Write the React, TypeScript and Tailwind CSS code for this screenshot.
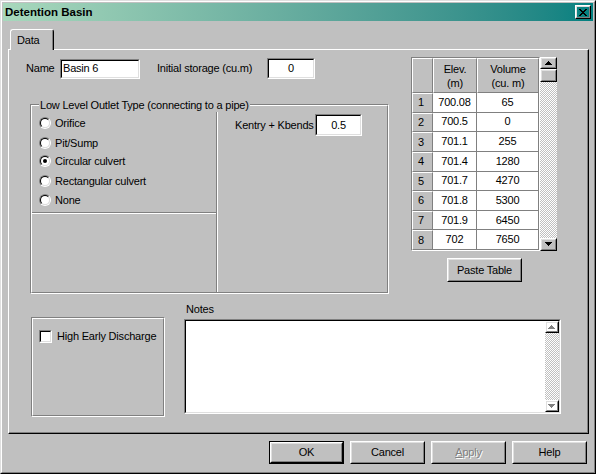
import React from 'react';

const raisedOuter = 'border border-t-white border-l-white border-r-black border-b-black';
const raisedInner = 'border border-t-[#dfdfdf] border-l-[#dfdfdf] border-r-[#808080] border-b-[#808080]';
const sunkenOuter = 'border border-t-[#808080] border-l-[#808080] border-r-white border-b-white';
const sunkenInner = 'border border-t-black border-l-black border-r-[#dfdfdf] border-b-[#dfdfdf]';
const etchedOuter = 'border border-t-[#808080] border-l-[#808080] border-r-white border-b-white';
const etchedInner = 'border border-t-white border-l-white border-r-[#808080] border-b-[#808080]';
const checker = 'bg-[repeating-conic-gradient(#c0c0c0_0%_25%,#ffffff_0%_50%)] bg-[length:2px_2px]';

const rows = [
  ['700.08', '65'],
  ['700.5', '0'],
  ['701.1', '255'],
  ['701.4', '1280'],
  ['701.7', '4270'],
  ['701.8', '5300'],
  ['701.9', '6450'],
  ['702', '7650'],
];

const radios = [
  { label: 'Orifice', mt: 'mt-[11px]' },
  { label: 'Pit/Sump', mt: 'mt-[8px]' },
  { label: 'Circular culvert', mt: 'mt-[6px]', checked: true },
  { label: 'Rectangular culvert', mt: 'mt-[8px]' },
  { label: 'None', mt: 'mt-[7px]' },
];

function Arrow({ up, disabled }: { up?: boolean; disabled?: boolean }) {
  const r = up
    ? [[3, 0, 1], [2, 1, 3], [1, 2, 5], [0, 3, 7]]
    : [[0, 0, 7], [1, 1, 5], [2, 2, 3], [3, 3, 1]];
  return (
    <svg width="8" height="5" viewBox="0 0 8 5" shapeRendering="crispEdges">
      {disabled &&
        r.map(([x, y, w]) => (
          <rect key={'s' + y} x={x + 1} y={y + 1} width={w} height={1} fill="#ffffff" />
        ))}
      {r.map(([x, y, w]) => (
        <rect key={y} x={x} y={y} width={w} height={1} fill={disabled ? '#808080' : '#000000'} />
      ))}
    </svg>
  );
}

function Raised({ className, children }: { className: string; children?: React.ReactNode }) {
  return (
    <div className={`${className} ${raisedOuter}`}>
      <div className={`flex h-full w-full items-center justify-center ${raisedInner}`}>{children}</div>
    </div>
  );
}

function Btn({ label, def, disabled }: { label: React.ReactNode; def?: boolean; disabled?: boolean }) {
  const body = (
    <Raised className="h-full w-full">
      <span className={disabled ? 'text-[#808080] [text-shadow:1px_1px_0_#ffffff]' : ''}>{label}</span>
    </Raised>
  );
  return <div className={`h-[23px] w-[75px] ${def ? 'border border-black' : ''}`}>{body}</div>;
}

function Edit({ className, value, center }: { className: string; value: string; center?: boolean }) {
  return (
    <div className={`${className} ${sunkenOuter}`}>
      <div className={`flex h-full w-full items-center bg-white px-[1px] ${sunkenInner} ${center ? 'justify-center' : ''}`}>
        {value}
      </div>
    </div>
  );
}

function Radio({ checked }: { checked?: boolean }) {
  return (
    <span className={`flex h-[12px] w-[12px] rounded-full ${sunkenOuter}`}>
      <span className={`flex flex-1 items-center justify-center rounded-full bg-white ${sunkenInner}`}>
        {checked && <span className="h-[4px] w-[4px] rounded-full bg-black" />}
      </span>
    </span>
  );
}

export default function App() {
  return (
    <div className="h-[474px] w-[596px] border border-t-[#dfdfdf] border-l-[#dfdfdf] border-r-black border-b-black bg-[#c0c0c0] font-['Liberation_Sans',Arial,sans-serif] text-[11px] leading-[13px] tracking-[-0.2px] whitespace-nowrap text-black">
      <div className="flex h-full w-full flex-col border border-t-white border-l-white border-r-[#808080] border-b-[#808080] p-px">
        {/* Title bar */}
        <div className="flex h-[18px] items-center justify-between bg-linear-to-r from-[#a8d8bc] to-[#008080] pl-[2px] pr-[2px]">
          <span className="text-[11.5px] font-bold tracking-normal">Detention Basin</span>
          <Raised className="h-[14px] w-[16px]">
            <svg width="8" height="7" viewBox="0 0 8 7" shapeRendering="crispEdges" className="-ml-px">
              <path
                d="M0 0h2v1h-2zM6 0h2v1h-2zM1 1h2v1h-2zM5 1h2v1h-2zM2 2h4v1h-4zM3 3h2v1h-2zM2 4h4v1h-4zM1 5h2v1h-2zM5 5h2v1h-2zM0 6h2v1h-2zM6 6h2v1h-2z"
                fill="#000"
              />
            </svg>
          </Raised>
        </div>

        {/* Tab strip */}
        <div className="mt-[8px] flex h-[20px] pl-[7px]">
          <div className="relative z-10 h-[21px] w-[44px] rounded-t-[3px] border-l border-t border-r border-l-white border-t-white border-r-black bg-[#c0c0c0]">
            <div className="flex h-full items-center border-r border-r-[#808080] pl-[6px]">Data</div>
          </div>
        </div>

        {/* Tab page */}
        <div className="ml-[5px] h-[385px] w-[581px] border border-t-white border-l-white border-r-black border-b-black">
          <div className="flex h-full flex-col border-r border-b border-r-[#808080] border-b-[#808080]">
            <div className="flex items-start">
              {/* Left column */}
              <div className="ml-[17px] w-[363px]">
                <div className="mt-[8px] flex h-[21px] items-center">
                  <span className="w-[34px]">Name</span>
                  <Edit className="h-[20px] w-[80px]" value="Basin 6" />
                  <span className="ml-[17px] w-[110px]">Initial storage (cu.m)</span>
                  <Edit className="h-[21px] w-[48px]" value="0" center />
                </div>

                <div className={`relative ml-[4px] mt-[25px] h-[190px] w-[359px] ${etchedOuter}`}>
                  <span className="absolute left-[8px] top-[-7px] bg-[#c0c0c0] px-[1px] leading-[14px]">
                    Low Level Outlet Type (connecting to a pipe)
                  </span>
                  <div className={`flex h-full w-full ${etchedInner}`}>
                    <div className="flex w-[185px] flex-col border-r border-r-[#808080]">
                      <div className="h-[107px] border-b border-b-[#808080] pl-[7px]">
                        {radios.map((r) => (
                          <div key={r.label} className={`flex h-[12px] items-center ${r.mt}`}>
                            <Radio checked={r.checked} />
                            <span className="ml-[4px] leading-[12px]">{r.label}</span>
                          </div>
                        ))}
                      </div>
                      <div className="flex-1 border-t border-t-white" />
                    </div>
                    <div className="flex-1 border-l border-l-white">
                      <div className="ml-[17px] mt-[8px] flex items-center">
                        <span className="w-[80px]">Kentry + Kbends</span>
                        <Edit className="h-[22px] w-[47px]" value="0.5" center />
                      </div>
                    </div>
                  </div>
                </div>
              </div>

              {/* Right column: table */}
              <div className="ml-[22px] mt-[7px] w-[146px]">
                <div className="flex h-[194px]">
                  <div className={`flex w-[129px] flex-col ${sunkenOuter}`}>
                    <div className="flex h-[35px]">
                      <div className="w-[21px] border border-t-white border-l-white border-r-[#808080] border-b-[#808080]" />
                      <div className="flex w-[44px] flex-col items-center justify-center border border-t-white border-l-white border-r-[#808080] border-b-[#808080] leading-[14px]">
                        <span>Elev.</span>
                        <span>(m)</span>
                      </div>
                      <div className="flex w-[62px] flex-col items-center justify-center border border-t-white border-l-white border-r-[#808080] border-b-[#808080] leading-[14px]">
                        <span>Volume</span>
                        <span>(cu. m)</span>
                      </div>
                    </div>
                    <div className="flex flex-1 flex-col">
                      {rows.map(([e, v], i) => (
                        <div key={i} className="flex flex-1">
                          <div className="flex w-[21px] items-center border border-t-white border-l-white border-r-[#808080] border-b-[#808080] pl-[5px]">
                            {i + 1}
                          </div>
                          <div className="flex w-[44px] items-center justify-center border-r border-b border-r-[#808080] border-b-[#808080] bg-white">
                            {e}
                          </div>
                          <div className="flex w-[62px] items-center justify-center border-r border-b border-r-[#808080] border-b-[#808080] bg-white">
                            {v}
                          </div>
                        </div>
                      ))}
                    </div>
                  </div>
                  <div className="flex w-[17px] flex-col">
                    <Raised className="h-[12px] w-full">
                      <Arrow up />
                    </Raised>
                    <Raised className="h-[13px] w-full" />
                    <div className={`flex-1 ${checker}`} />
                    <Raised className="h-[13px] w-full">
                      <Arrow />
                    </Raised>
                  </div>
                </div>
                <div className="ml-[36px] mt-[7px] h-[24px] w-[75px]">
                  <Raised className="h-full w-full">Paste Table</Raised>
                </div>
              </div>
            </div>

            {/* Bottom section */}
            <div className="flex items-start">
              <div className={`ml-[22px] mt-[23px] h-[100px] w-[134px] ${etchedOuter}`}>
                <div className={`h-full w-full ${etchedInner}`}>
                  <div className="ml-[6px] mt-[11px] flex items-center">
                    <span className={`flex h-[13px] w-[13px] ${sunkenOuter}`}>
                      <span className={`flex-1 bg-white ${sunkenInner}`} />
                    </span>
                    <span className="ml-[5px]">High Early Discharge</span>
                  </div>
                </div>
              </div>
              <div className="ml-[19px] mt-[9px]">
                <div className="h-[13px] pl-[2px]">Notes</div>
                <div className={`mt-[3px] h-[95px] w-[377px] ${sunkenOuter}`}>
                  <div className={`flex h-full w-full justify-end bg-white ${sunkenInner}`}>
                    <div className="flex w-[14px] flex-col">
                      <Raised className="h-[12px] w-full">
                        <Arrow up disabled />
                      </Raised>
                      <div className={`flex-1 ${checker}`} />
                      <Raised className="h-[12px] w-full">
                        <Arrow disabled />
                      </Raised>
                    </div>
                  </div>
                </div>
              </div>
            </div>
          </div>
        </div>

        {/* Dialog buttons */}
        <div className="mt-[7px] flex justify-end gap-[6px] pr-[6px]">
          <Btn label="OK" def />
          <Btn label="Cancel" />
          <Btn
            label={
              <>
                <span className="underline">A</span>pply
              </>
            }
            disabled
          />
          <Btn label="Help" />
        </div>
      </div>
    </div>
  );
}
